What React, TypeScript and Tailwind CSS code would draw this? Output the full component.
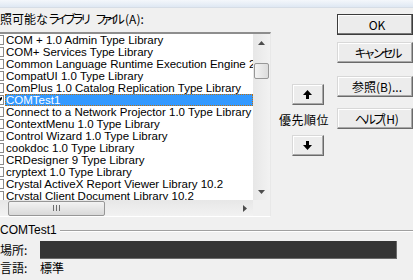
import React from 'react';

const libraries = [
  'COM + 1.0 Admin Type Library',
  'COM+ Services Type Library',
  'Common Language Runtime Execution Engine 2.0 Library',
  'CompatUI 1.0 Type Library',
  'ComPlus 1.0 Catalog Replication Type Library',
  'COMTest1',
  'Connect to a Network Projector 1.0 Type Library',
  'ContextMenu 1.0 Type Library',
  'Control Wizard 1.0 Type Library',
  'cookdoc 1.0 Type Library',
  'CRDesigner 9 Type Library',
  'cryptext 1.0 Type Library',
  'Crystal ActiveX Report Viewer Library 10.2',
  'Crystal Client Document Library 10.2',
];

const Arrow: React.FC<{ down?: boolean }> = ({ down }) => (
  <svg width="9" height="9" viewBox="0 0 9 9" className={down ? 'rotate-180' : ''}>
    <polygon points="4.5,0 9,5 0,5" fill="#000" />
    <rect x="3" y="5" width="3" height="4" fill="#000" />
  </svg>
);

const DialogButton: React.FC<{ children: React.ReactNode; isDefault?: boolean }> = ({ children, isDefault }) => (
  <button
    type="button"
    className={`h-[21px] w-[76px] bg-[#ececec] text-[12px] leading-none pl-[4px] ${
      isDefault
        ? 'border border-[#3c3c3c] shadow-[inset_-1px_-1px_0_#7a7a7a,inset_1px_1px_0_#ffffff]'
        : 'border border-t-[#d8d8d8] border-l-[#d8d8d8] border-b-[#6a6a6a] border-r-[#6a6a6a] shadow-[inset_-1px_-1px_0_#a8a8a8,inset_1px_1px_0_#ffffff]'
    }`}
  >
    {children}
  </button>
);

export default function App() {
  return (
    <div className="w-[413px] h-[280px] overflow-hidden bg-[#f0f0f0] text-black text-[12px] font-['Liberation_Sans','Noto_Sans_CJK_JP',sans-serif]">
      <div className="h-[8px] bg-gradient-to-b from-[#f4f7fb] to-[#dfe8f3] border-b border-[#d6dde6]" />
      <div className="flex h-[210px]">
        {/* library list */}
        <div className="w-[271px] flex flex-col">
          <div className="h-[24px] pt-[4px] leading-[14px] font-['Noto_Sans_CJK_JP',sans-serif] text-[12px] whitespace-nowrap">
            照可能な<span className="tracking-[-4px]">ライブラリ</span>
            <span className="ml-[7px] tracking-[-6px]">ファイル</span>
            <span className="ml-[6px]">(A):</span>
          </div>
          <div className="h-[185px] border-t-2 border-r border-b border-t-[#8e8e8e] border-r-[#e8e8e8] border-b-[#ffffff] bg-white flex flex-col">
            <div className="flex h-[166px]">
              <div className="flex-1 overflow-hidden">
                {libraries.map((name) => {
                  const selected = name === 'COMTest1';
                  return (
                    <div key={name} className="h-[12px] flex items-center whitespace-nowrap">
                      <div className="ml-[-7px] w-[11px] h-[10px] shrink-0 border border-[#8a8a8a] bg-white flex items-center justify-center">
                        {selected && (
                          <svg width="7" height="7" viewBox="0 0 7 7">
                            <path d="M0 3 L2.5 5.5 L7 0.5" stroke="#000" strokeWidth="2" fill="none" />
                          </svg>
                        )}
                      </div>
                      <div
                        className={`ml-[1px] h-[12px] flex items-center pl-[1px] text-[11.5px] leading-[12px] ${
                          selected ? 'flex-1 bg-[#3399ff] text-white outline-1 outline-dotted outline-[#c0700f] -outline-offset-1' : ''
                        }`}
                      >
                        {name}
                      </div>
                    </div>
                  );
                })}
              </div>
              {/* vertical scrollbar */}
              <div className="w-[17px] bg-gradient-to-r from-[#e7e7e7] to-[#f2f2f2] flex flex-col items-center">
                <div className="h-[17px] w-full flex items-center justify-center">
                  <svg width="7" height="4" viewBox="0 0 7 4"><polygon points="3.5,0 7,4 0,4" fill="#4d4d4d" /></svg>
                </div>
                <div className="mt-[12px] h-[16px] w-[15px] rounded-[2px] border border-[#979797] bg-gradient-to-r from-[#f3f3f3] to-[#dcdcdc]" />
                <div className="flex-1" />
                <div className="h-[17px] w-full flex items-center justify-center">
                  <svg width="7" height="4" viewBox="0 0 7 4"><polygon points="0,0 7,0 3.5,4" fill="#4d4d4d" /></svg>
                </div>
              </div>
            </div>
            {/* horizontal scrollbar */}
            <div className="h-[16px] flex">
              <div className="flex-1 bg-gradient-to-b from-[#e7e7e7] to-[#f2f2f2] flex items-center">
                <div className="ml-[8px] h-[15px] w-[97px] rounded-[2px] border border-[#979797] bg-gradient-to-b from-[#f3f3f3] to-[#d9d9d9] flex items-center justify-center gap-[2px]">
                  <div className="w-px h-[6px] bg-[#6d6d6d]" />
                  <div className="w-px h-[6px] bg-[#6d6d6d]" />
                  <div className="w-px h-[6px] bg-[#6d6d6d]" />
                </div>
                <div className="flex-1" />
                <div className="w-[17px] flex items-center justify-center">
                  <svg width="4" height="7" viewBox="0 0 4 7"><polygon points="0,0 4,3.5 0,7" fill="#4d4d4d" /></svg>
                </div>
              </div>
              <div className="w-[17px] bg-[#f0f0f0]" />
            </div>
          </div>
        </div>

        {/* priority */}
        <div className="w-[79px] flex flex-col items-center pt-[76px] font-['Noto_Sans_CJK_JP',sans-serif]">
          <button
            type="button"
            className="ml-[7px] w-[32px] h-[21px] bg-[#ececec] border border-t-[#d8d8d8] border-l-[#d8d8d8] border-b-[#6a6a6a] border-r-[#6a6a6a] shadow-[inset_-1px_-1px_0_#a8a8a8,inset_1px_1px_0_#ffffff] flex items-center justify-center"
          >
            <Arrow />
          </button>
          <div className="mt-[8px] h-[14px] leading-[14px] text-[12px] tracking-[0.5px]">優先順位</div>
          <button
            type="button"
            className="mt-[8px] ml-[7px] w-[32px] h-[21px] bg-[#ececec] border border-t-[#d8d8d8] border-l-[#d8d8d8] border-b-[#6a6a6a] border-r-[#6a6a6a] shadow-[inset_-1px_-1px_0_#a8a8a8,inset_1px_1px_0_#ffffff] flex items-center justify-center"
          >
            <Arrow down />
          </button>
        </div>

        {/* dialog buttons */}
        <div className="flex flex-col pt-[6px] font-['Noto_Sans_CJK_JP',sans-serif]">
          <DialogButton isDefault>OK</DialogButton>
          <div className="mt-[7px]">
            <DialogButton>
              <span className="tracking-[-3px]">キャンセル</span>
            </DialogButton>
          </div>
          <div className="mt-[13px]">
            <DialogButton>参照(B)...</DialogButton>
          </div>
          <div className="mt-[11px]">
            <DialogButton>
              <span className="tracking-[-3px]">ヘルプ</span>(H)
            </DialogButton>
          </div>
        </div>
      </div>

      {/* details */}
      <div className="pt-[6px] font-['Noto_Sans_CJK_JP',sans-serif]">
        <div className="flex items-center h-[13px]">
          <span className="font-['Liberation_Sans',sans-serif] text-[12px] leading-[13px]">COMTest1</span>
          <div className="ml-[3px] flex-1 h-[2px] border-t border-[#a0a0a0] border-b border-b-white" />
        </div>
        <div className="mt-[4px] flex items-center h-[18px]">
          <span className="w-[40px] leading-[14px]">場所:</span>
          <div className="w-[357px] h-[18px] bg-[#353535] border-r border-b border-[#6a6a6a]" />
        </div>
        <div className="mt-[3px] flex items-center h-[12px]">
          <span className="w-[40px] leading-[12px]">言語:</span>
          <span className="leading-[12px]">標準</span>
        </div>
      </div>
    </div>
  );
}
